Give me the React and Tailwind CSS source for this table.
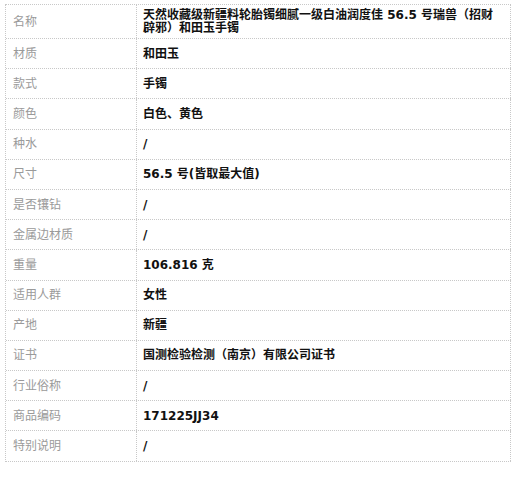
import React from 'react';

const rows = [
  ['材质', '和田玉'],
  ['款式', '手镯'],
  ['颜色', '白色、黄色'],
  ['种水', '/'],
  ['尺寸', '56.5 号(皆取最大值)'],
  ['是否镶钻', '/'],
  ['金属边材质', '/'],
  ['重量', '106.816 克'],
  ['适用人群', '女性'],
  ['产地', '新疆'],
  ['证书', '国测检验检测（南京）有限公司证书'],
  ['行业俗称', '/'],
  ['商品编码', '171225JJ34'],
  ['特别说明', '/'],
];

const font = { fontFamily: '"DejaVu Sans", "Noto Sans CJK SC", sans-serif' };

const App = () => {
  return (
    <div className="w-[520px] h-[477px] bg-white pt-[4px] pl-[5px]" style={font}>
      <div className="w-[506px] border-t border-l border-dotted border-[#c8c8c8]">
        <div className="flex h-[34px] border-b border-dotted border-[#c8c8c8]">
          <div className="w-[131px] shrink-0 flex items-center pl-[7px] text-[12px] text-[#9a9a9a] border-r border-dotted border-[#c8c8c8]">
            名称
          </div>
          <div className="flex-1 flex items-center pl-[6px] pr-[16px] text-[12px] leading-[13px] font-bold text-[#111] border-r border-dotted border-[#c8c8c8]">
            天然收藏级新疆料轮胎镯细腻一级白油润度佳 56.5 号瑞兽（招财辟邪）和田玉手镯
          </div>
        </div>
        {rows.map(([label, value]) => (
          <div key={label} className="flex h-[30.2px] border-b border-dotted border-[#c8c8c8]">
            <div className="w-[131px] shrink-0 flex items-center pl-[7px] text-[12px] text-[#9a9a9a] border-r border-dotted border-[#c8c8c8]">
              {label}
            </div>
            <div className="flex-1 flex items-center pl-[6px] text-[12px] font-bold text-[#111] border-r border-dotted border-[#c8c8c8]">
              {value}
            </div>
          </div>
        ))}
      </div>
    </div>
  );
};

export default App;
